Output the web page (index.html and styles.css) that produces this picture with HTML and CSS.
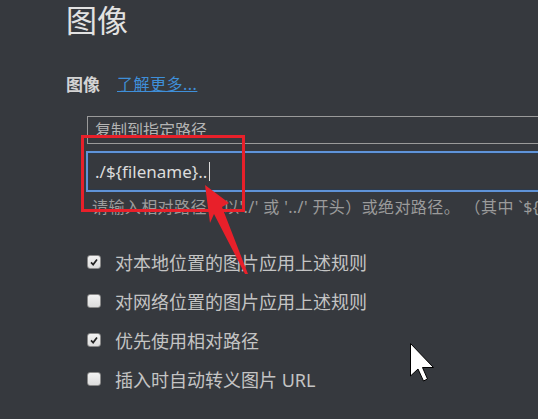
FILE: index.html
```
<!DOCTYPE html>
<html lang="zh-CN">
<head>
    <meta charset="UTF-8">
    <meta name="viewport" content="width=device-width, initial-scale=1.0">
    <title>图像</title>
    <link rel="stylesheet" href="styles.css">
</head>
<body>
    <div class="page">
        <h1 class="title">图像</h1>
        <div class="setting-head">
            <span class="setting-name">图像</span>
            <a href="#" class="learn-more">了解更多...</a>
        </div>
        <div class="setting-body">
            <div class="select-box">复制到指定路径</div>
            <div class="text-input">./${filename}..<span class="caret"></span></div>
            <p class="hint">请输入相对路径（以'./' 或 '../' 开头）或绝对路径。 （其中 `${filename}` 表示文件名）</p>
            <ul class="options">
                <li class="option"><span class="check on"><svg viewBox="0 0 14 14"><path d="M3.5 7.5 L6 10 L10.5 4" fill="none" stroke="#222" stroke-width="2"/></svg></span>对本地位置的图片应用上述规则</li>
                <li class="option"><span class="check"></span>对网络位置的图片应用上述规则</li>
                <li class="option"><span class="check on"><svg viewBox="0 0 14 14"><path d="M3.5 7.5 L6 10 L10.5 4" fill="none" stroke="#222" stroke-width="2"/></svg></span>优先使用相对路径</li>
                <li class="option"><span class="check"></span>插入时自动转义图片 URL</li>
            </ul>
        </div>

        <div class="mark-box"></div>
        <svg class="mark-arrow" width="538" height="419" viewBox="0 0 538 419">
            <polygon points="205,185 229,203 222,207 248,274 245,274 214,214 210,223" fill="#e8202a"/>
        </svg>
        <svg class="pointer" width="26" height="40" viewBox="0 0 26 40">
            <polygon points="0.5,0.5 0.5,33 8,26 13.5,38 17.5,36 12.5,24.5 23.5,24.5" fill="#fff" stroke="#000" stroke-width="1"/>
        </svg>
    </div>
</body>
</html>
```
FILE: styles.css
```
body {
    margin: 0;
    padding: 0;
    background-color: #36393e;
    font-family: 'Segoe UI', 'Noto Sans', 'Noto Sans CJK SC', sans-serif;
    overflow: hidden;
    width: 538px;
    height: 419px;
}
.page {
    position: relative;
    height: 419px;
    padding-left: 66px;
    overflow: hidden;
}
.title {
    margin: 0;
    padding-top: 1px;
    font-size: 31px;
    line-height: 38px;
    font-weight: normal;
    color: #e2e2e2;
}
.setting-head {
    margin-top: 27px;
    height: 34px;
    display: flex;
    align-items: center;
    gap: 17px;
}
.setting-name {
    font-size: 17px;
    font-weight: bold;
    color: #d4d4d4;
}
.learn-more {
    font-size: 16px;
    letter-spacing: 0.5px;
    color: #3f8fd9;
    text-decoration: underline;
}
.setting-body {
    margin-left: 20px;
    margin-top: 16px;
    overflow: hidden;
}
.select-box {
    width: 600px;
    height: 28px;
    box-sizing: border-box;
    margin-left: 1px;
    border: 1px solid #9a9a9a;
    padding-left: 7px;
    font-size: 16px;
    line-height: 26px;
    color: #b4b4b4;
}
.text-input {
    margin-top: 7px;
    width: 600px;
    height: 41px;
    box-sizing: border-box;
    border: 2px solid #5f93d8;
    box-shadow: inset 0 0 0 1px #2c3a4c;
    padding-left: 7px;
    font-size: 17px;
    line-height: 37px;
    color: #dcdcdc;
    display: flex;
    align-items: center;
}
.caret {
    display: inline-block;
    width: 1px;
    height: 19px;
    margin-left: 2px;
    background-color: #dcdcdc;
}
.hint {
    margin: 4px 0 0 6px;
    font-size: 16px;
    letter-spacing: 0.4px;
    line-height: 22px;
    color: #9b9b9b;
    white-space: nowrap;
}
.options {
    list-style: none;
    margin: 24px 0 0 0;
    padding: 0;
}
.option {
    height: 39px;
    display: flex;
    align-items: center;
    font-size: 18px;
    color: #c4c4c4;
}
.check {
    width: 14px;
    height: 14px;
    box-sizing: border-box;
    margin-left: 1px;
    margin-right: 14px;
    border: 1px solid #8a8a8a;
    border-radius: 3px;
    background: linear-gradient(#f2f2f2, #dcdcdc);
    display: flex;
}
.check svg {
    width: 12px;
    height: 12px;
}
.mark-box {
    position: absolute;
    left: 81px;
    top: 135px;
    width: 158px;
    height: 71px;
    border: 3px solid #e8202a;
}
.mark-arrow {
    position: absolute;
    left: 0;
    top: 0;
}
.pointer {
    position: absolute;
    left: 410px;
    top: 343px;
}
```
